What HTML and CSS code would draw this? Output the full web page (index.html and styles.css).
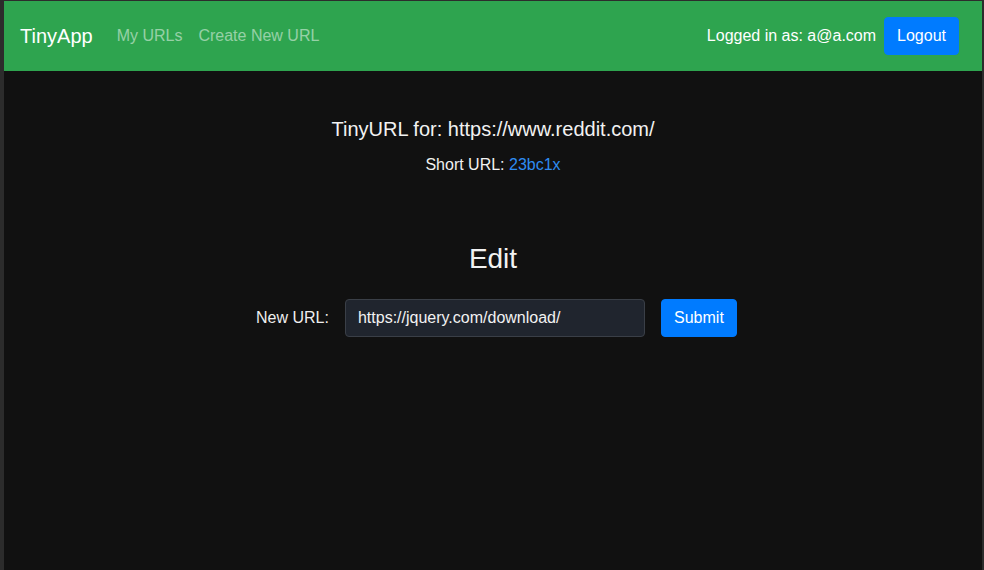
FILE: index.html
```html
<!DOCTYPE html>
<html lang="en">
<head>
<meta charset="utf-8">
<title>TinyApp</title>
<link rel="stylesheet" href="styles.css">
</head>
<body>
<div class="frame">
  <nav class="navbar">
    <div class="nav-left">
      <a class="brand" href="#">TinyApp</a>
      <a class="nav-link" href="#">My URLs</a>
      <a class="nav-link" href="#">Create New URL</a>
    </div>
    <div class="nav-right">
      <span class="user">Logged in as: a@a.com</span>
      <button class="btn" type="button">Logout</button>
    </div>
  </nav>
  <main class="content">
    <h2 class="title">TinyURL for: https://www.reddit.com/</h2>
    <p class="short">Short URL: <a class="short-link" href="#">23bc1x</a></p>
    <h1 class="edit">Edit</h1>
    <form class="edit-form">
      <label class="label" for="newurl">New URL:</label>
      <input class="input" id="newurl" type="text" value="https://jquery.com/download/">
      <button class="btn btn-submit" type="button">Submit</button>
    </form>
  </main>
</div>
</body>
</html>
```
FILE: styles.css
```css
html {
  background: #2c2c2c;
  height: 100%;
}
body {
  margin: 0;
  padding: 1px 2px 0 4px;
  height: 100%;
  box-sizing: border-box;
  font-family: "Liberation Sans", Arial, sans-serif;
  font-size: 16px;
  line-height: 1.5;
  color: #f2f2f2;
}
.frame {
  background: #111111;
  height: 100%;
}
.navbar {
  display: flex;
  justify-content: space-between;
  align-items: center;
  background: #2ea44f;
  padding: 16px 23px 16px 16px;
  height: 70px;
  box-sizing: border-box;
}
.nav-left, .nav-right {
  display: flex;
  align-items: center;
}
.brand {
  color: #ffffff;
  font-size: 20px;
  text-decoration: none;
  margin-right: 16px;
  line-height: 30px;
}
.nav-link {
  color: rgba(255, 255, 255, 0.5);
  text-decoration: none;
  padding: 0 8px;
}
.user {
  color: #ffffff;
  margin-right: 8px;
}
.btn {
  font-family: inherit;
  font-size: 16px;
  line-height: 24px;
  color: #ffffff;
  background: #007bff;
  border: 1px solid #007bff;
  border-radius: 4px;
  padding: 6px 12px;
  height: 38px;
  box-sizing: border-box;
}
.btn-submit {
  width: 76px;
}
.content {
  display: flex;
  flex-direction: column;
  align-items: center;
}
.title {
  font-size: 20px;
  font-weight: normal;
  line-height: 30px;
  margin: 43px 0 0;
}
.short {
  margin: 9px 0 0;
  line-height: 24px;
}
.short-link {
  color: #2e8cf2;
  text-decoration: none;
}
.edit {
  font-size: 28px;
  font-weight: normal;
  line-height: 34px;
  margin: 65px 0 0;
}
.edit-form {
  display: flex;
  align-items: center;
  gap: 16px;
  margin-top: 23px;
  padding-left: 7px;
}
.label {
  color: #eeeeee;
}
.input {
  width: 300px;
  height: 38px;
  box-sizing: border-box;
  background: #20252e;
  border: 1px solid #3a3f47;
  border-radius: 4px;
  padding: 6px 12px;
  color: #f2f2f2;
  font-family: inherit;
  font-size: 16px;
}
```
